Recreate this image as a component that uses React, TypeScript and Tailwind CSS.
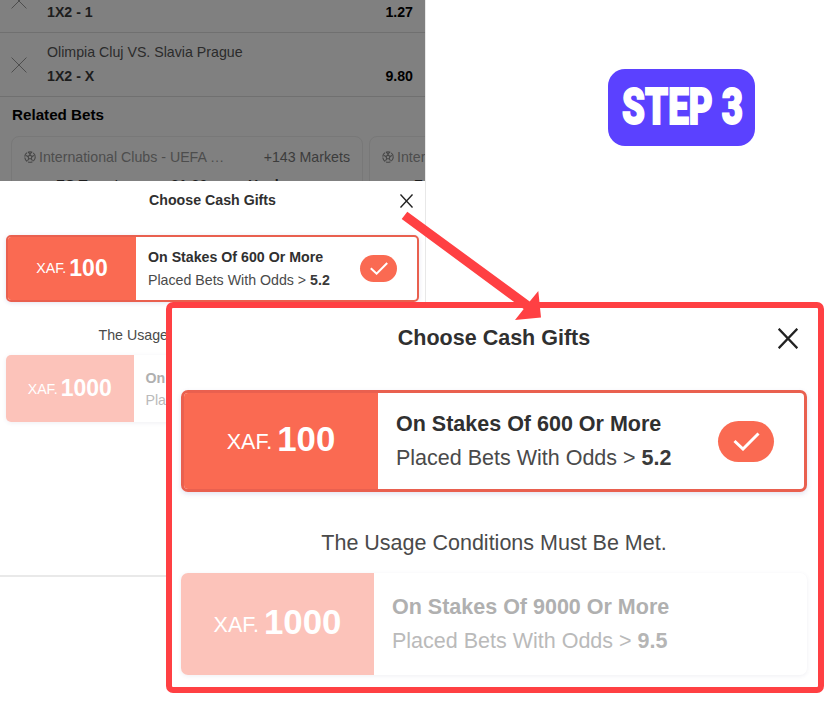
import React from "react";

function Cross({ className, strokeWidth }: { className: string; strokeWidth: number }) {
  return (
    <svg viewBox="0 0 20 20" preserveAspectRatio="none" className={className} fill="none" stroke="currentColor" strokeWidth={strokeWidth}>
      <path d="M0.7 0.7L19.3 19.3M19.3 0.7L0.7 19.3" />
    </svg>
  );
}

function Ball() {
  return (
    <svg viewBox="0 0 24 24" className="h-3 w-3 shrink-0 text-[#454545]" fill="none" stroke="currentColor" strokeWidth="2.2">
      <circle cx="12" cy="12" r="10.5" strokeDasharray="9 2" />
      <path d="M12 8l4 3-1.500 4.500h-5L8 11z" fill="#808080" />
      <path d="M16 11l4-2M14.500 15.500l2.500 4M9.500 15.500l-2.500 4M8 11L4 9M8 2.500l4 2.500 4-2.500M12 5v3" />
    </svg>
  );
}

function Selection({ teams, pick, odds }: { teams: string; pick: string; odds: string }) {
  return (
    <div className="flex h-16 shrink-0 items-center border-b border-[#707070] pl-[11px] pr-3">
      <Cross className="h-4 w-4 text-[#4b4b4b]" strokeWidth={1.2} />
      <div className="ml-5 flex-1 pb-px">
        <div className="h-[25px] text-[14.2px] leading-[25px] text-[#2b2b2b]">{teams}</div>
        <div className="flex justify-between text-[14.2px] font-bold leading-[23px]">
          <span className="text-[#1d1d1d]">{pick}</span>
          <span className="text-black">{odds}</span>
        </div>
      </div>
    </div>
  );
}

function RelatedCard() {
  return (
    <div className="h-20 w-[352px] shrink-0 rounded-lg border border-[#787878] bg-[#808080] px-3 pt-2.5">
      <div className="flex h-5 items-center whitespace-nowrap text-[14.2px] leading-5">
        <Ball />
        <span className="ml-[3px] text-[#4d4d4d]">International Clubs - UEFA …</span>
        <span className="ml-auto text-[#3c3c3c]">+143 Markets</span>
      </div>
      <div className="flex pl-8 pt-2 text-[14.2px] font-bold leading-5 text-[#1d1d1d]">
        <span className="w-[115px]">FC Twente</span>
        <span className="w-[77px]">21:30</span>
        <span>Hoek</span>
      </div>
    </div>
  );
}

type GiftProps = { amount: string; stake: string; odds: string; active?: boolean; large?: boolean };

function Gift({ amount, stake, odds, active = false, large = false }: GiftProps) {
  const frame = active
    ? large
      ? "border-[3px] border-[#e9604f] shadow-[0_2px_5px_rgba(80,80,160,0.16)]"
      : "border-2 border-[#e9604f] shadow-[0_1px_4px_rgba(80,80,160,0.16)]"
    : "shadow-[0_1px_4px_rgba(80,80,120,0.09)]";
  const size = large ? "h-[102px] w-[626px] rounded-[7px]" : "h-[67px] w-[413px] rounded-[5px]";
  const tagWidth = large ? (active ? "w-[194px]" : "w-[193px]") : active ? "w-32" : "w-[127.500px]";
  const tagOffset = large ? (active ? "pb-1" : "pb-1") : active ? "pb-0.5" : "pb-px";
  return (
    <div className={`flex shrink-0 overflow-hidden bg-white ${size} ${frame}`}>
      <div className={`flex shrink-0 items-center justify-center text-white ${tagWidth} ${tagOffset} ${active ? "bg-[#fa6a52]" : "bg-[#fcc3ba]"}`}>
        <span className={large ? "pt-1.5 text-[21.5px]" : "pt-[3px] text-[14.2px]"}>XAF.</span>
        <span className={large ? "ml-[5px] text-[34.800px] font-bold leading-[42px]" : "ml-[3px] text-[23px] font-bold leading-7"}>{amount}</span>
      </div>
      <div className={`flex-1 whitespace-nowrap ${large ? (active ? "pl-[18px] pt-[14px] text-[21.5px] leading-[34px]" : "pl-[18px] pt-[17px] text-[21.5px] leading-[34px]") : active ? "pl-3 pt-[9px] text-[14.2px] leading-[22.5px]" : "pl-3 pt-[11.500px] text-[14.2px] leading-[22.5px]"}`}>
        <div className={`font-bold ${active ? "text-[#303030]" : "text-[#b0b0b0]"}`}>{stake}</div>
        <div className={active ? "text-[#4a4a4a]" : "text-[#bababa]"}>
          Placed Bets With Odds &gt; <b className={active ? "text-[#3a3a3a]" : "text-[#b5b5b5]"}>{odds}</b>
        </div>
      </div>
      {active && (
        <div className={`flex items-center justify-center self-center rounded-full bg-[#fa6a52] ${large ? "mr-[30px] h-[41px] w-14" : "mr-5 h-[27px] w-[37px]"}`}>
          <svg viewBox="0 0 26 19" className={large ? "h-[19px] w-[27px]" : "h-[13px] w-[18px]"} fill="none" stroke="white" strokeWidth="3">
            <path d="M1 9L9.500 17L25 1.500" />
          </svg>
        </div>
      )}
    </div>
  );
}

export default function App() {
  return (
    <div className="relative h-[703px] w-[840px] overflow-hidden bg-white font-['Liberation_Sans',Arial,sans-serif]">
      <div className="flex h-[577px] w-[426px] flex-col border-b-2 border-r border-b-[#e9e9e9] border-r-[#e8e8e8] bg-white">
        <div className="flex h-[181px] shrink-0 flex-col overflow-hidden bg-[#808080]">
          <div className="-mt-[31px]" />
          <Selection teams="" pick="1X2 - 1" odds="1.27" />
          <Selection teams="Olimpia Cluj VS. Slavia Prague" pick="1X2 - X" odds="9.80" />
          <h2 className="h-[39px] shrink-0 pl-3 pt-1.5 text-[15.2px] font-bold leading-6 text-black">Related Bets</h2>
          <div className="flex gap-1.5 pl-[11px]">
            <RelatedCard />
            <RelatedCard />
          </div>
        </div>
        <div className="relative flex h-[54px] shrink-0 justify-center pt-2">
          <h2 className="text-[14.2px] font-bold leading-[22px] text-[#303030]">Choose Cash Gifts</h2>
          <Cross className="absolute right-[12px] top-[13px] h-[14px] w-[13px] text-[#222222]" strokeWidth={2.2} />
        </div>
        <div className="flex flex-col pl-1.5">
          <Gift amount="100" stake="On Stakes Of 600 Or More" odds="5.2" active />
          <div className="h-[53px] w-[413px] pt-[22px] text-center text-[14.2px] leading-[22px] text-[#4a4a4a]">The Usage Conditions Must Be Met.</div>
          <Gift amount="1000" stake="On Stakes Of 9000 Or More" odds="9.5" />
        </div>
      </div>

      <div className="absolute left-[608px] top-[69px] flex h-[77px] w-[147px] items-center justify-center rounded-[17px] bg-[#5b41ff]">
        <svg viewBox="0 0 147 77" className="h-[77px] w-[147px]" fill="white" stroke="white" strokeWidth="1.8" fontFamily="Roboto, sans-serif" fontWeight="900" fontSize="50">
          <text x="14" y="55" textLength="121" lengthAdjust="spacingAndGlyphs">STEP 3</text>
        </svg>
      </div>

      <div className="absolute left-[166px] top-[302px] flex h-[391px] w-[658px] flex-col rounded-[7px] border-[6px] border-[#ff4043] bg-white pl-[9px]">
        <div className="flex h-[82px] w-[626px] shrink-0 justify-center pt-[14px]">
          <h2 className="text-[21.5px] font-bold leading-8 text-[#303030]">Choose Cash Gifts</h2>
          <Cross className="absolute right-[20px] top-[20px] h-[21px] w-[20px] text-[#222222]" strokeWidth={2.2} />
        </div>
        <Gift amount="100" stake="On Stakes Of 600 Or More" odds="5.2" active large />
        <div className="h-[81px] w-[626px] shrink-0 pt-[35px] text-center text-[21.5px] leading-8 text-[#4a4a4a]">The Usage Conditions Must Be Met.</div>
        <Gift amount="1000" stake="On Stakes Of 9000 Or More" odds="9.5" large />
      </div>

      <svg viewBox="0 0 150 120" className="absolute left-[400px] top-[205px] h-[120px] w-[150px]" fill="#ff4043">
        <path d="M1.700 14L7.300 6.700L129.700 96.500L138.300 86L141 112.400L115 115L123.700 104Z" />
      </svg>
    </div>
  );
}
